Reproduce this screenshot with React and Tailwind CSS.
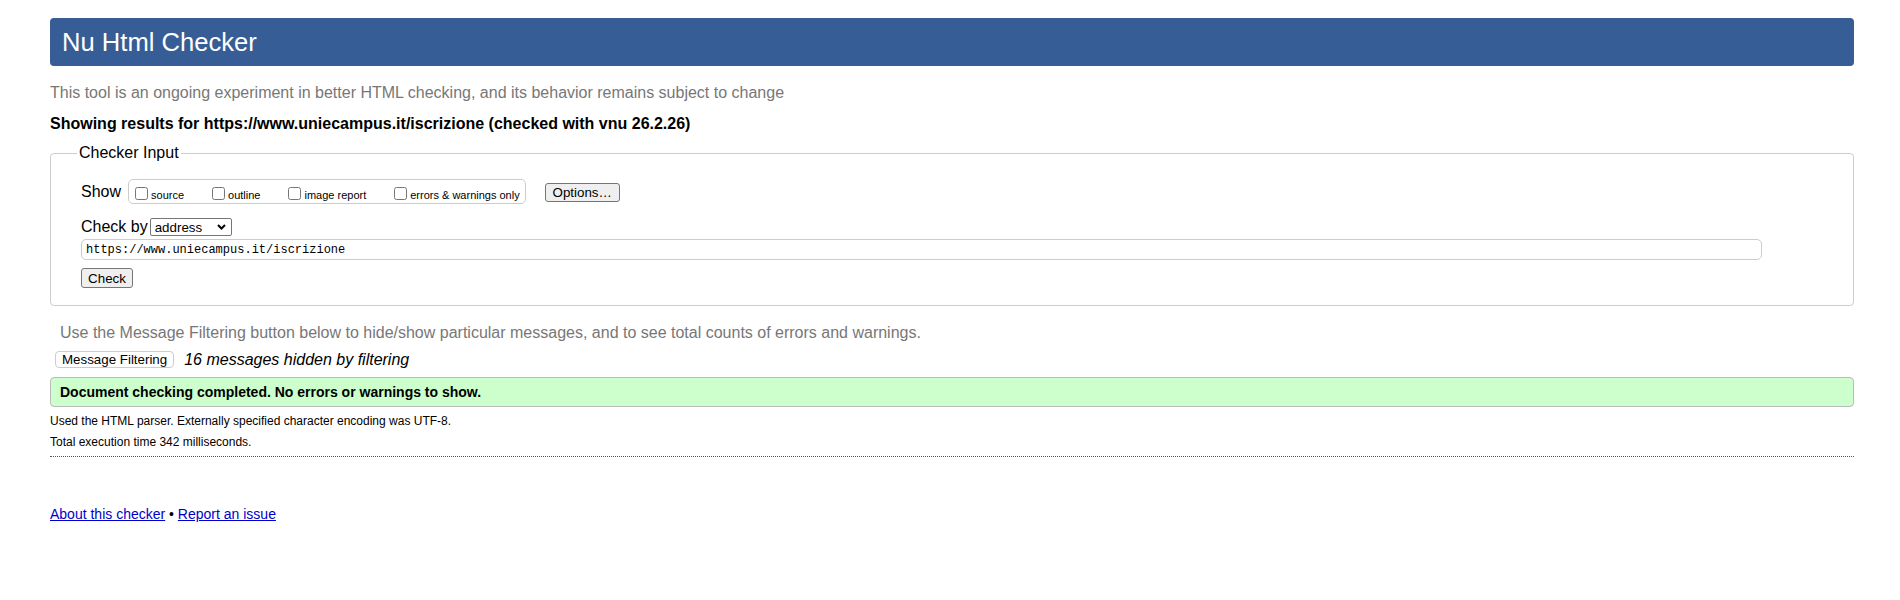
import React, { useState } from 'react';

const showOptions = [
  { id: 'showsource', label: 'source' },
  { id: 'showoutline', label: 'outline' },
  { id: 'showimagereport', label: 'image report' },
  { id: 'errorsonly', label: 'errors & warnings only' },
];

const CheckerInput = ({ url, setUrl }) => {
  const [checked, setChecked] = useState({});

  return (
    <fieldset className="mt-[11px] border border-[#ccc] rounded-[4px] px-[26px] pt-[17px] pb-[17px]">
      <legend className="px-[2px] text-[16px] leading-[18px]">Checker Input</legend>
      <div className="pl-[4px]">
        {/* Show options */}
        <div className="flex items-center h-[25px]">
          <span className="text-[16px] leading-[18px]">Show</span>
          <div className="ml-[7px] h-[25px] flex items-center border border-[#ccc] rounded-[5px] pl-[6px] pr-[5px]">
            {showOptions.map((opt, i) => (
              <label
                key={opt.id}
                className={`flex items-center ${i < showOptions.length - 1 ? 'mr-[28px]' : ''}`}
              >
                <input
                  type="checkbox"
                  className="m-0 mt-[4px] w-[13px] h-[13px]"
                  checked={!!checked[opt.id]}
                  onChange={(e) => setChecked({ ...checked, [opt.id]: e.target.checked })}
                />
                <span className="ml-[3px] mt-[6px] text-[11px] leading-[12px]">{opt.label}</span>
              </label>
            ))}
          </div>
          <button className="ml-[19px] mt-[2px] h-[19px] w-[75px] bg-[#efefef] border border-[#767676] rounded-[3px] text-[13.33px] leading-[15px]">
            Options…
          </button>
        </div>

        {/* Check by */}
        <div className="flex items-center h-[18px] mt-[14px]">
          <span className="text-[16px] leading-[18px] -mt-[1px]">Check by</span>
          <span className="relative ml-[2px] inline-flex">
            <select className="appearance-none w-[82px] h-[18px] pl-[4px] border border-[#767676] rounded-[2px] bg-white text-[13.33px] leading-[15px]">
              <option>address</option>
              <option>file upload</option>
              <option>text input</option>
            </select>
            <svg
              className="absolute right-[6px] top-[6px] pointer-events-none"
              width="9"
              height="6"
              viewBox="0 0 9 6"
            >
              <path d="M1 1 L4.5 4.5 L8 1" fill="none" stroke="#000" strokeWidth="2" />
            </svg>
          </span>
        </div>

        <input
          type="url"
          value={url}
          onChange={(e) => setUrl(e.target.value)}
          className="block mt-[3px] w-[1681px] h-[21px] border border-[#ccc] rounded-[5px] px-[4px] font-['Liberation_Mono',monospace] text-[12px] leading-[14px] outline-none"
        />

        <button className="block mt-[8px] h-[20px] w-[52px] bg-[#efefef] border border-[#767676] rounded-[3px] text-[13.33px] leading-[15px]">
          Check
        </button>
      </div>
    </fieldset>
  );
};

export default function App() {
  const [url, setUrl] = useState('https://www.uniecampus.it/iscrizione');

  return (
    <div className="pl-[50px] pr-[46px] bg-white text-black font-['Liberation_Sans',Arial,sans-serif]">
      <h1 className="mt-[18px] h-[48px] flex items-center bg-[#365d95] text-white rounded-[4px] pl-[12px] text-[25.6px] leading-[30px] font-normal">
        Nu Html Checker
      </h1>

      <p className="mt-[18px] text-[16px] leading-[18px] text-[#777]">
        This tool is an ongoing experiment in better HTML checking, and its behavior remains subject to change
      </p>
      <p className="mt-[13px] text-[16px] leading-[18px] font-bold">
        Showing results for {url} (checked with vnu 26.2.26)
      </p>

      <CheckerInput url={url} setUrl={setUrl} />

      <p className="mt-[18px] pl-[10px] text-[16px] leading-[18px] text-[#777]">
        Use the Message Filtering button below to hide/show particular messages, and to see total counts of errors and warnings.
      </p>

      <div className="mt-[9px] h-[17px] flex items-center">
        <button className="ml-[5px] h-[17px] px-[6px] bg-white border border-[#ccc] rounded-[4px] text-[13.33px] leading-[15px]">
          Message Filtering
        </button>
        <span className="ml-[10px] text-[16px] leading-[18px] italic">16 messages hidden by filtering</span>
      </div>

      {/* Result summary */}
      <div className="mt-[9px] h-[30px] flex items-center pl-[9px] bg-[#ccffcc] border border-[#bbb] rounded-[4px] text-[14px] leading-[16px] font-bold">
        Document checking completed. No errors or warnings to show.
      </div>

      <p className="mt-[7px] text-[12px] leading-[14px]">
        Used the HTML parser. Externally specified character encoding was UTF-8.
      </p>
      <p className="mt-[7px] text-[12px] leading-[14px]">Total execution time 342 milliseconds.</p>

      <hr className="mt-[7px] border-0 border-t border-dotted border-[#555]" />

      <p className="mt-[49px] text-[14px] leading-[16px]">
        <a href="#about" className="text-[#0000cc] underline">About this checker</a>
        {' • '}
        <a href="#report" className="text-[#0000cc] underline">Report an issue</a>
      </p>
    </div>
  );
}
